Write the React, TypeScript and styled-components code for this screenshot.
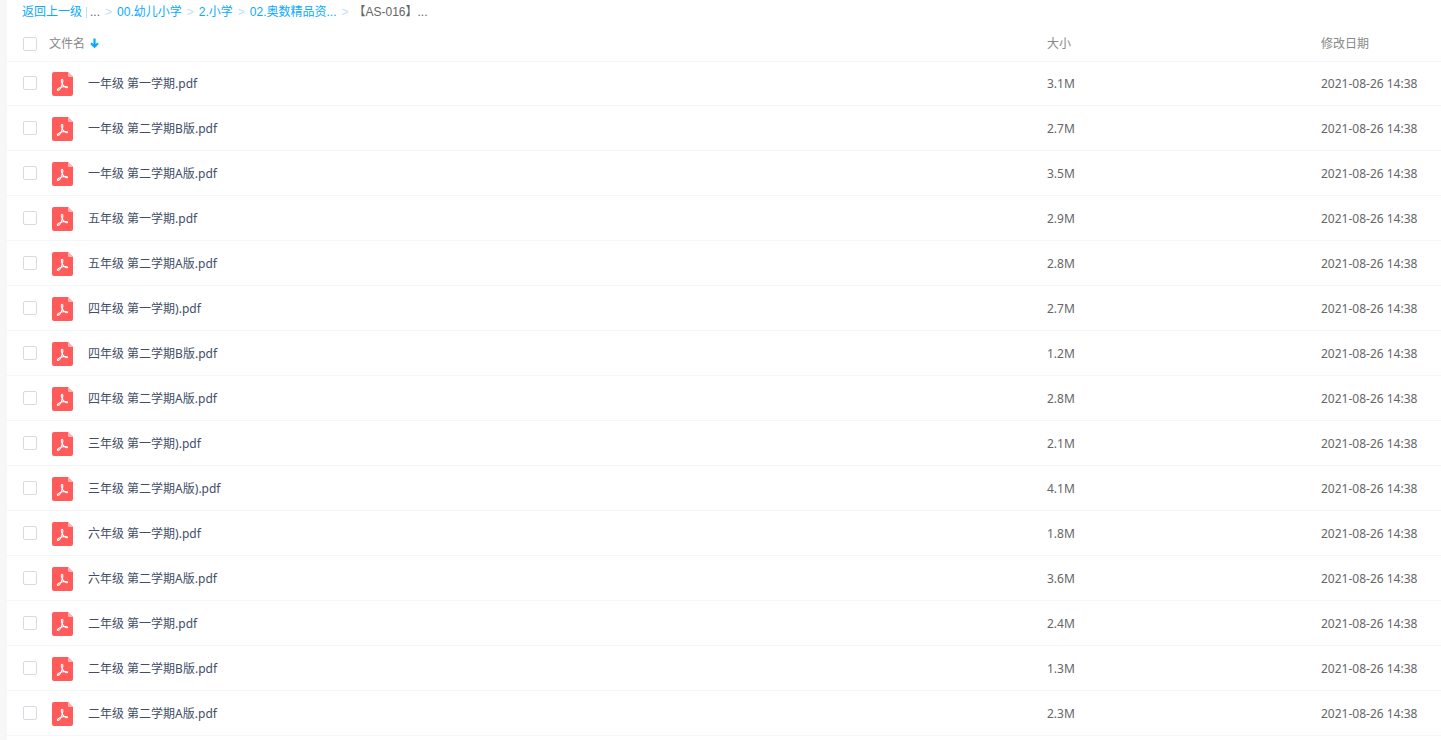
import React from 'react';
import styled, { createGlobalStyle } from 'styled-components';

const GlobalStyle = createGlobalStyle`
  * { box-sizing: border-box; }
  body {
    margin: 0;
    background: #f7f7f7;
    color: #424e67;
    font-family: "Noto Sans", "Noto Sans CJK SC", sans-serif;
    font-size: 12px;
    line-height: 18px;
    overflow: hidden;
  }
`;

const Panel = styled.main`
  margin-left: 7px;
  min-height: 100vh;
  background: #fff;
`;

const Breadcrumb = styled.nav`
  height: 24px;
  padding: 3px 15px;
  display: flex;
  align-items: center;
  white-space: pre;
  font-family: "Liberation Sans", "Noto Sans CJK SC", sans-serif;
`;

const Crumb = styled.a`
  color: #09aaff;
  text-decoration: none;
`;

const Divider = styled.span`
  width: 1px;
  height: 11px;
  margin: 0 3px 0 4px;
  background: #c4dbfe;
`;

const Arrow = styled.span`
  margin: 0 5px;
  color: #c4dbfe;
`;

const Current = styled.span`
  color: #666;
`;

const Table = styled.table`
  width: 100%;
  table-layout: fixed;
  border-collapse: separate;
  border-spacing: 0;
`;

const NameCol = styled.col``;
const SizeCol = styled.col`
  width: 274px;
`;
const DateCol = styled.col`
  width: 120px;
`;

const HeadCell = styled.th`
  height: 37px;
  padding: 2px 0 0;
  color: #888;
  font-weight: 400;
  text-align: left;
  vertical-align: middle;
  box-shadow: 0 1px 0 #f2f6fd;
`;

const Cell = styled.td`
  height: 45px;
  padding: 0;
  color: #666;
  vertical-align: middle;
  border-bottom: 1px solid #f2f6fd;
`;

const TextCell = styled(Cell)`
  padding-top: 2px;
`;

const NameGroup = styled.div`
  display: flex;
  align-items: center;
  padding-left: 16px;
`;

const Check = styled.input`
  appearance: none;
  flex: none;
  width: 14px;
  height: 14px;
  margin: 0;
  border: 1px solid #d5dae3;
  border-radius: 2px;
  background: #fff;
  &:checked { background: #09aaff; }
`;

const SortButton = styled.button`
  display: flex;
  align-items: center;
  gap: 5px;
  margin-left: 12px;
  padding: 0;
  border: 0;
  background: none;
  color: inherit;
  font: inherit;
`;

const FileIcon = styled.svg`
  flex: none;
  margin: 1px 15px 0;
`;

const FileLabel = styled.label`
  padding-top: 2px;
  color: #424e67;
`;

const DownArrow = () => (
  <svg width="9" height="12" viewBox="0 0 9 12" aria-hidden="true">
    <path d="M4.5 0.5V8M1 5.2L4.5 8.7L8 5.2" fill="none" stroke="#09aaff" strokeWidth="2.2" />
  </svg>
);

const PdfIcon = () => (
  <FileIcon width="21" height="24" viewBox="0 0 21 24" aria-hidden="true">
    <path d="M2 0H16L21 5V22a2 2 0 0 1-2 2H2a2 2 0 0 1-2-2V2a2 2 0 0 1 2-2Z" fill="#ff5b5b" />
    <path d="M16 0L21 5H17a1 1 0 0 1-1-1Z" fill="#ffb5b5" />
    <path
      d="M9.7 7.4C11.3 6.8 11 9.6 10.3 11.8C9.5 14.5 7.5 18.4 5.9 18.4C4.1 18.1 6.8 15.9 9 15.3C11.3 14.6 15.4 14 15.6 15.2C15.5 16.6 12.2 15.1 10.8 12.8C9.7 11 8.7 8 9.7 7.4Z"
      fill="none"
      stroke="#fff"
      strokeWidth="1.1"
      strokeLinejoin="round"
    />
  </FileIcon>
);

const files = [
  ['一年级 第一学期.pdf', '3.1M'],
  ['一年级 第二学期B版.pdf', '2.7M'],
  ['一年级 第二学期A版.pdf', '3.5M'],
  ['五年级 第一学期.pdf', '2.9M'],
  ['五年级 第二学期A版.pdf', '2.8M'],
  ['四年级 第一学期).pdf', '2.7M'],
  ['四年级 第二学期B版.pdf', '1.2M'],
  ['四年级 第二学期A版.pdf', '2.8M'],
  ['三年级 第一学期).pdf', '2.1M'],
  ['三年级 第二学期A版).pdf', '4.1M'],
  ['六年级 第一学期).pdf', '1.8M'],
  ['六年级 第二学期A版.pdf', '3.6M'],
  ['二年级 第一学期.pdf', '2.4M'],
  ['二年级 第二学期B版.pdf', '1.3M'],
  ['二年级 第二学期A版.pdf', '2.3M'],
];

export default function App() {
  return (
    <>
      <GlobalStyle />
      <Panel>
        <Breadcrumb>
          <Crumb href="#up">返回上一级</Crumb>
          <Divider />
          <Current>...</Current>
          <Arrow>&gt;</Arrow>
          <Crumb href="#primary">00.幼儿小学</Crumb>
          <Arrow>&gt;</Arrow>
          <Crumb href="#school">2.小学</Crumb>
          <Arrow>&gt;</Arrow>
          <Crumb href="#math">02.奥数精品资...</Crumb>
          <Arrow>&gt;</Arrow>
          <Current>【AS-016】...</Current>
        </Breadcrumb>
        <Table>
          <colgroup>
            <NameCol />
            <SizeCol />
            <DateCol />
          </colgroup>
          <thead>
            <tr>
              <HeadCell>
                <NameGroup>
                  <Check type="checkbox" aria-label="全选" />
                  <SortButton type="button">
                    文件名
                    <DownArrow />
                  </SortButton>
                </NameGroup>
              </HeadCell>
              <HeadCell>大小</HeadCell>
              <HeadCell>修改日期</HeadCell>
            </tr>
          </thead>
          <tbody>
            {files.map(([name, size], i) => (
              <tr key={name}>
                <Cell>
                  <NameGroup>
                    <Check type="checkbox" id={`file-${i}`} />
                    <PdfIcon />
                    <FileLabel htmlFor={`file-${i}`}>{name}</FileLabel>
                  </NameGroup>
                </Cell>
                <TextCell>{size}</TextCell>
                <TextCell>2021-08-26 14:38</TextCell>
              </tr>
            ))}
          </tbody>
        </Table>
      </Panel>
    </>
  );
}
